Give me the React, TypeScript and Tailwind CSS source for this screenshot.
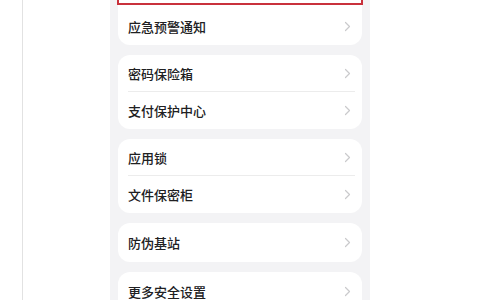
import React from "react";

type Row = { label: string };

function Chevron() {
  return (
    <svg width="7" height="11" viewBox="0 0 7 11" fill="none" className="shrink-0">
      <path d="M1.5 1.5l4 4-4 4" stroke="#cacacc" strokeWidth="1.2" strokeLinecap="round" strokeLinejoin="round" />
    </svg>
  );
}

function Item({ label, divider, tall }: { label: string; divider?: boolean; tall?: boolean }) {
  return (
    <div
      className={
        tall
          ? "relative flex h-[39px] items-center justify-between pl-[10px] pr-[11px]"
          : "relative flex h-[37px] items-center justify-between pl-[10px] pr-[11px]"
      }
    >
      <span className="text-[13px] font-medium text-[#202022]">{label}</span>
      <Chevron />
      {divider && <div className="absolute bottom-0 left-[10px] right-[7px] h-px bg-[#ececec]" />}
    </div>
  );
}

function Card({ rows }: { rows: Row[] }) {
  return (
    <div className="rounded-[12px] bg-white">
      {rows.map((r, i) => (
        <Item key={r.label} label={r.label} divider={i < rows.length - 1} tall={rows.length === 1} />
      ))}
    </div>
  );
}

export default function App() {
  const groups: Row[][] = [
    [{ label: "密码保险箱" }, { label: "支付保护中心" }],
    [{ label: "应用锁" }, { label: "文件保密柜" }],
    [{ label: "防伪基站" }],
    [{ label: "更多安全设置" }],
  ];

  return (
    <div
      className="flex h-[300px] w-[480px] overflow-hidden bg-white"
      style={{ fontFamily: '"Noto Sans CJK SC", "Noto Sans", sans-serif' }}
    >
      <div className="w-[22px] shrink-0" />
      <div className="w-[1px] shrink-0 bg-[#e2e2e2]" />
      <div className="w-[87px] shrink-0" />
      <div className="flex w-[260px] shrink-0 flex-col gap-[10px] bg-[#f3f3f5] px-[8px]">
        <div className="-mt-[40px] rounded-[12px] bg-white">
          <div className="-mx-[1px] h-[45px] border-[2.5px] border-[#c9313c]" />
          <div className="flex h-[40px] items-center justify-between pl-[10px] pr-[11px] pt-[3px]">
            <span className="text-[13px] font-medium text-[#202022]">应急预警通知</span>
            <Chevron />
          </div>
        </div>
        {groups.map((g) => (
          <Card key={g[0].label} rows={g} />
        ))}
      </div>
    </div>
  );
}
